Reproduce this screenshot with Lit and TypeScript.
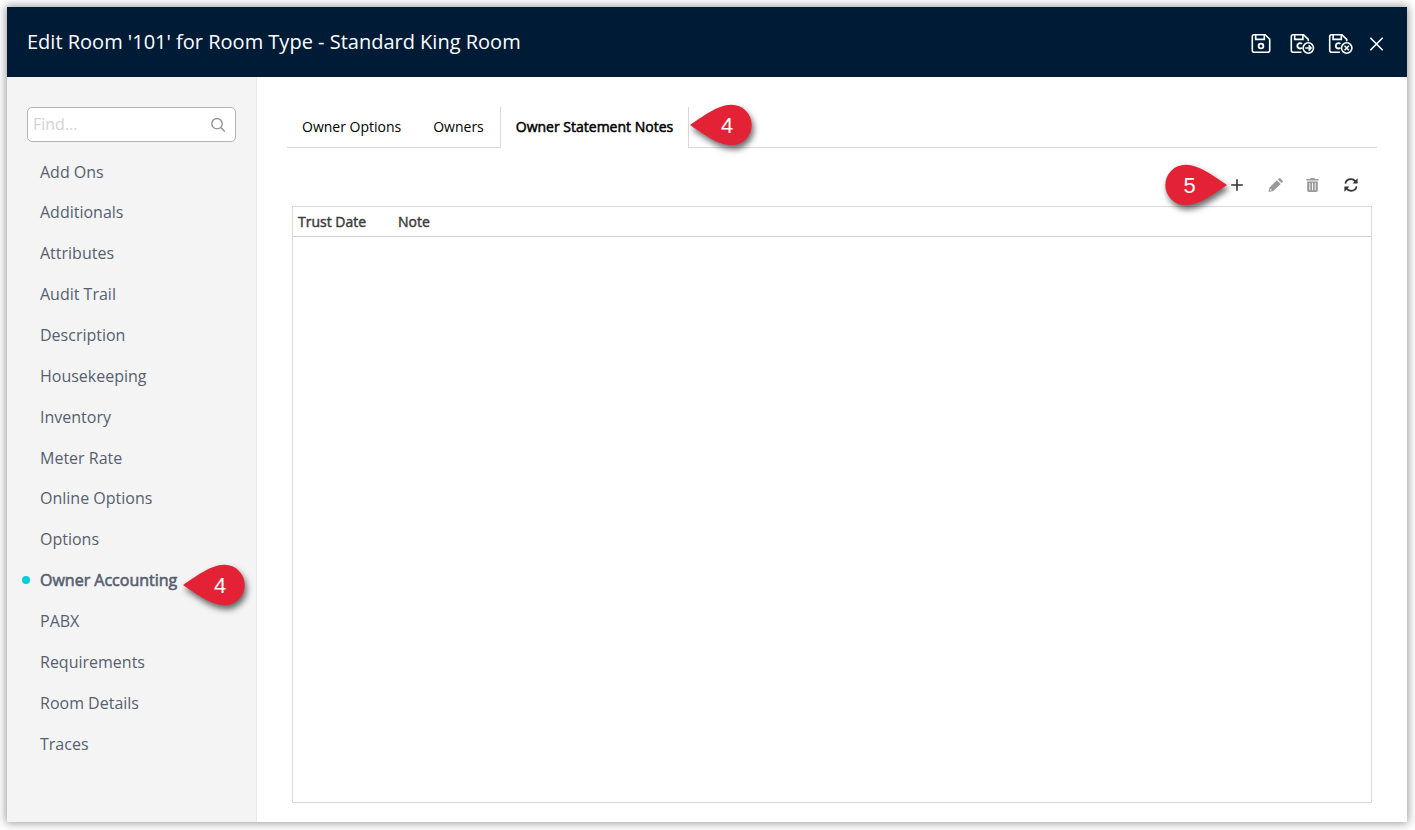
import { LitElement, html, css, svg } from "lit";
import { customElement, property, state } from "lit/decorators.js";
import { classMap } from "lit/directives/class-map.js";

const floppy = svg`<path d="M3 1.8H14.2L18.7 6.3V17.2Q18.7 19.2 16.7 19.2H3.3Q1.3 19.2 1.3 17.2V3.5Q1.3 1.8 3 1.8Z"/><path d="M4.7 2V6.4H13.3V2"/>`;
const floppyOpen = svg`<path d="M11.5 19.2H3.3Q1.3 19.2 1.3 17.2V3.5Q1.3 1.8 3 1.8H13.6L18.3 6.3V8.2"/><path d="M4.7 2V6.4H12.9V2"/><path d="M12 10.9A2.7 2.7 0 1 0 12 14.7" stroke-width="1.9"/><circle cx="18.3" cy="15" r="5.2"/>`;

@customElement("pin-marker")
export class PinMarker extends LitElement {
  @property() label = "";
  @property({ type: Boolean }) right = false;

  static styles = css`
    :host { display: block; width: 62px; height: 41px; position: relative; }
    svg { display: block; overflow: visible; filter: drop-shadow(2px 4px 3px rgba(0, 0, 0, 0.6)); }
    .flip { transform: scaleX(-1); filter: drop-shadow(-2px 4px 3px rgba(0, 0, 0, 0.6)); }
    .num { position: absolute; top: 1px; left: 17px; width: 40px; text-align: center; color: #fff; font: 22px/41px "Liberation Sans", Arial, sans-serif; }
    .num.flipped { left: 4.5px; }
  `;

  render() {
    return html`<svg class=${classMap({ flip: this.right })} width="62" height="41" viewBox="0 0 62 41">
        <path fill="#e32235" d="M0 21C11 14 27 .8 41.5 .8A20.2 20.2 0 0 1 41.5 41.2C27 41.2 11 28 0 21Z" />
      </svg>
      <span class=${classMap({ num: true, flipped: this.right })}>${this.label}</span>`;
  }
}

@customElement("app-root")
export class AppRoot extends LitElement {
  @state() section = "Owner Accounting";
  @state() tab = "Owner Statement Notes";

  private sections = [
    "Add Ons", "Additionals", "Attributes", "Audit Trail", "Description", "Housekeeping", "Inventory",
    "Meter Rate", "Online Options", "Options", "Owner Accounting", "PABX", "Requirements", "Room Details", "Traces",
  ];
  private tabs = ["Owner Options", "Owners", "Owner Statement Notes"];

  static styles = css`
    :host { display: block; box-sizing: border-box; height: 830px; padding: 7px 8px 8px 7px; background: #fff; font-family: "Open Sans", sans-serif; position: relative; overflow: hidden; }
    * { box-sizing: border-box; }
    svg { display: block; fill: none; stroke: currentColor; stroke-width: 1.6; }
    .dialog { display: flex; flex-direction: column; height: 815px; background: #fff; box-shadow: 0 0 9px 1px rgba(0, 0, 0, 0.42); }
    header { display: flex; align-items: center; height: 70px; flex: none; padding: 0 23px 0 20px; background: #001b36; color: #fff; }
    h1 { margin: 0; font-size: 20px; font-weight: 400; line-height: 70px; flex: 1; }
    .actions { display: flex; align-items: center; padding-top: 3px; }
    .actions .save { margin-right: 19px; }
    .actions .go { margin-right: 13px; }
    .actions .exit { margin-right: 15px; }
    .body { display: flex; flex: 1; min-height: 0; }
    aside { width: 250px; background: #f4f4f4; border-right: 1px solid #e9e9e9; padding: 30px 20px 0; }
    .find { display: flex; align-items: center; justify-content: space-between; width: 209px; height: 35px; padding: 0 9px 0 5px; background: #fff; border: 1px solid #b3b3b3; border-radius: 5px; color: #d3d3d3; font-size: 16px; }
    .find span { padding-bottom: 2px; }
    .find svg { color: #919191; stroke-width: 1.4; }
    ul { list-style: none; margin: 9.15px 0 0; padding: 0; }
    li { display: flex; align-items: center; height: 40.86px; padding-left: 13px; font-size: 16px; color: #565f70; cursor: pointer; }
    li.on { padding-left: 0; margin-left: -5px; -webkit-text-stroke: 0.6px #565f70; }
    li.on::before { content: ""; width: 8px; height: 8px; margin-right: 10px; border-radius: 50%; background: #00cddb; }
    main { flex: 1; padding: 30px 30px 19px; display: flex; flex-direction: column; }
    .tabs { display: flex; height: 41px; flex: none; font-size: 14px; line-height: 40px; color: #000; }
    .tab { border-bottom: 1px solid #d9d9d9; padding: 0 16px 0 15px; cursor: pointer; white-space: nowrap; }
    .tab:first-child { padding-right: 17px; }
    .tab.on { width: 189px; border: 1px solid #d9d9d9; border-width: 0 1px; padding: 0 0 0 15px; -webkit-text-stroke: 0.5px #000; }
    .rest { flex: 1; border-bottom: 1px solid #d9d9d9; }
    .tools { display: flex; height: 58px; flex: none; align-items: center; justify-content: flex-end; padding: 16px 19px 0 0; color: #333; }
    .tools svg { stroke: none; fill: currentColor; }
    .tools .add { margin-right: 25px; }
    .tools .edit { margin-right: 23px; color: #999; }
    .tools .del { margin-right: 25px; color: #999; }
    .grid { flex: 1; margin: 0 5px; border: 1px solid #d9d9d9; }
    .cols { display: flex; height: 30px; border-bottom: 1px solid #d0d0d0; font-size: 14px; line-height: 30px; color: #3b3b3b; -webkit-text-stroke: 0.45px #3b3b3b; }
    .cols span:first-child { width: 100px; }
    .cols span { padding-left: 5px; }
    pin-marker { position: absolute; }
    .pin-tab { left: 690px; top: 104px; }
    .pin-add { left: 1165px; top: 164px; }
    .pin-nav { left: 183px; top: 564px; }
  `;

  render() {
    return html`
      <div class="dialog">
        <header>
          <h1>Edit Room '101' for Room Type - Standard King Room</h1>
          <div class="actions">
            <svg class="save" width="20" height="21" viewBox="0 0 20 21">${floppy}<circle cx="10" cy="13" r="2.4" stroke-width="1.8" /></svg>
            <svg class="go" width="25" height="21" viewBox="0 0 25 21">${floppyOpen}<path d="M15.2 15H20.8M18.6 12.4L21.1 15L18.6 17.6" stroke-width="1.6" /></svg>
            <svg class="exit" width="25" height="21" viewBox="-0.4 0 25 21">${floppyOpen}<path d="M16.1 12.8L20.5 17.2M20.5 12.8L16.1 17.2" stroke-width="1.5" /></svg>
            <svg width="16" height="16" viewBox="-0.5 0 16 16"><path d="M1.8 1.8L14.2 14.2M14.2 1.8L1.8 14.2" /></svg>
          </div>
        </header>
        <div class="body">
          <aside>
            <div class="find">
              <span>Find...</span>
              <svg width="16" height="16" viewBox="0 0 16 16"><circle cx="7" cy="6.7" r="5.2" /><path d="M10.7 10.5L14.8 14.6" /></svg>
            </div>
            <ul>
              ${this.sections.map((s) => html`<li class=${classMap({ on: s === this.section })} @click=${() => (this.section = s)}>${s}</li>`)}
            </ul>
          </aside>
          <main>
            <div class="tabs">
              ${this.tabs.map((t) => html`<div class=${classMap({ tab: true, on: t === this.tab })} @click=${() => (this.tab = t)}>${t}</div>`)}
              <div class="rest"></div>
            </div>
            <div class="tools">
              <svg class="add" width="12" height="12" viewBox="0 0 12 12"><path d="M5.2 0.2H6.8V5.2H11.8V6.8H6.8V11.8H5.2V6.8H0.2V5.2H5.2Z" /></svg>
              <svg class="edit" width="15" height="14" viewBox="0 0 15 14"><path fill-rule="evenodd" d="M0.6 14L1.5 9.5L8.9 2.3L12.7 6L5.2 13.1ZM2.4 10.6L2 12.6L4 12.2ZM9.8 1.5L11 .4Q11.7 -.2 12.5 .5L14.5 2.4Q15.2 3.2 14.6 3.9L13.5 5.1Z" /></svg>
              <svg class="del" width="13" height="14" viewBox="0 0 13 14"><path fill-rule="evenodd" d="M.4 1H4L4.6 0H8.4L9 1H12.6V2.6H.4ZM1.2 3.4H11.8V12.6Q11.8 14 10.4 14H2.6Q1.2 14 1.2 12.6ZM3.4 5V12.3H4.3V5ZM6.05 5V12.3H6.95V5ZM8.7 5V12.3H9.6V5Z" /></svg>
              <svg width="14" height="14" viewBox="0 0 14 14"><path d="M1.4 5.6C1.9 2.8 4.2 1.2 7 1.2C8.9 1.2 10.4 2 11.6 3.3M12.6 8.4C12.1 11.2 9.8 12.8 7 12.8C5.1 12.8 3.6 12 2.4 10.7" fill="none" stroke="currentColor" stroke-width="1.7" /><path d="M13.6 .3V5.5H8.6ZM.4 13.7V8.5H5.4Z" /></svg>
            </div>
            <div class="grid">
              <div class="cols"><span>Trust Date</span><span>Note</span></div>
            </div>
          </main>
        </div>
      </div>
      <pin-marker class="pin-tab" label="4"></pin-marker>
      <pin-marker class="pin-add" label="5" right></pin-marker>
      <pin-marker class="pin-nav" label="4"></pin-marker>
    `;
  }
}
